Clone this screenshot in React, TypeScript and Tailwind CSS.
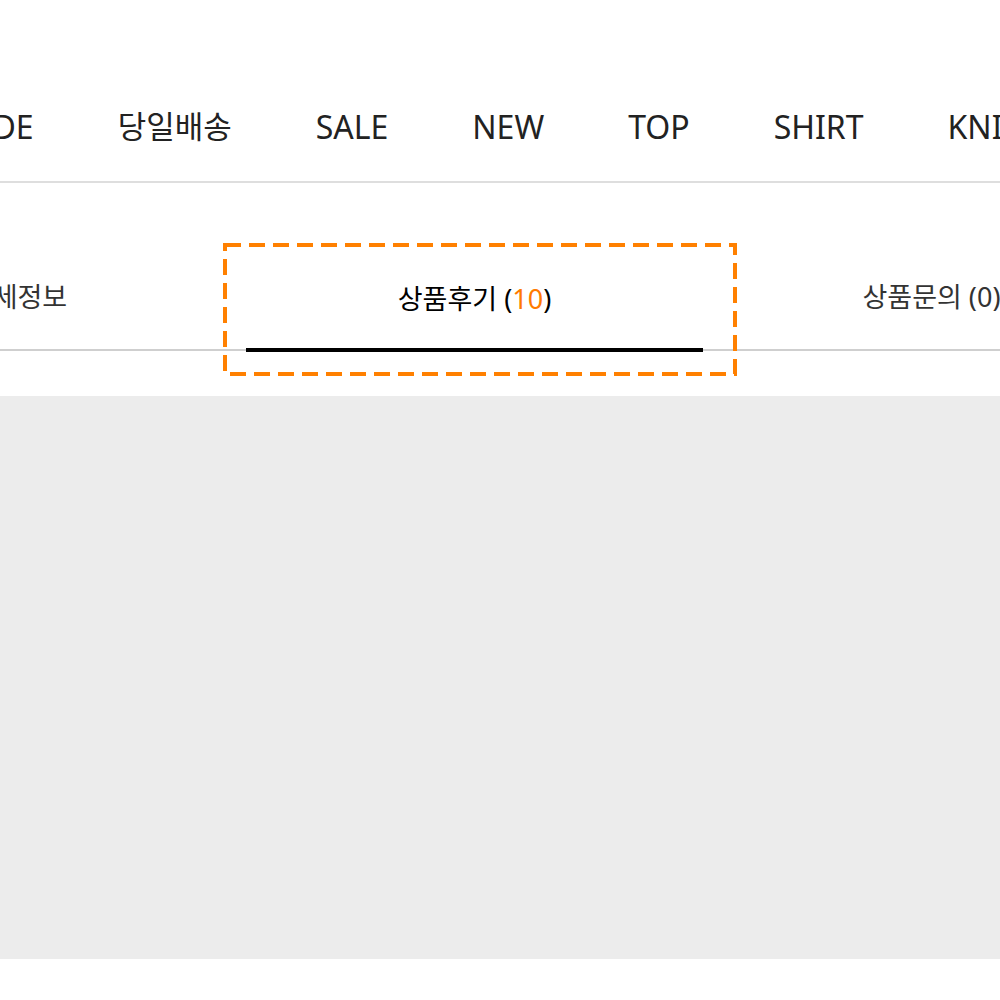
import React from 'react';

const navItems = ['MADE', '당일배송', 'SALE', 'NEW', 'TOP', 'SHIRT', 'KNIT', 'PANTS'];

const tabs = [
  { label: '상세정보', count: null as number | null },
  { label: '상품후기', count: 10 },
  { label: '상품문의', count: 0 },
];

const font = { fontFamily: '"Noto Sans", "Noto Sans CJK KR", sans-serif' };

const App: React.FC = () => {
  const active = 1;

  return (
    <div className="relative w-[1000px] h-[1000px] bg-white overflow-hidden" style={font}>
      {/* Category menu */}
      <div className="h-[183px] pt-[72px] border-b-2 border-[#dedede] overflow-hidden">
        <ul className="h-full flex items-center gap-[84px] -ml-[57px] whitespace-nowrap text-[32px] text-[#222]">
          {navItems.map((item) => (
            <li key={item} className={/[가-힣]/.test(item) ? 'text-[31px]' : ''}>
              {item}
            </li>
          ))}
        </ul>
      </div>

      {/* Product tabs */}
      <div className="pt-[63px]">
        <div className="flex items-end -ml-[211px] border-b-2 border-[#cfcfcf]">
          {tabs.map((tab, i) => (
            <div
              key={tab.label}
              className={
                i === active
                  ? 'w-[457px] shrink-0 h-[103px] flex items-center justify-center text-[27px] text-black border-b-4 border-black -mb-[3px] pt-[2px]'
                  : 'w-[457px] shrink-0 h-[103px] flex items-center justify-center text-[27px] text-[#333]'
              }
            >
              <span>
                {tab.label}
                {tab.count !== null && (
                  <>
                    {' ('}
                    <span className={i === active ? 'text-[#ff7a00]' : ''}>{tab.count}</span>
                    {')'}
                  </>
                )}
              </span>
            </div>
          ))}
        </div>
      </div>

      <div className="h-[45px]" />

      {/* Review content area */}
      <div className="h-[563px] bg-[#ececec]" />

      {/* highlight frame around the active tab */}
      <svg
        className="absolute left-[223px] top-[243px] pointer-events-none"
        width="514"
        height="133"
        viewBox="0 0 514 133"
      >
        <rect
          x="2"
          y="2"
          width="510"
          height="129"
          fill="none"
          stroke="#ff8000"
          strokeWidth="4"
          strokeDasharray="16 8"
        />
      </svg>
    </div>
  );
};

export default App;
